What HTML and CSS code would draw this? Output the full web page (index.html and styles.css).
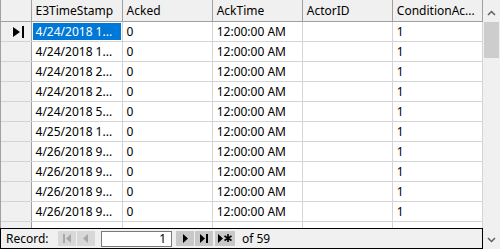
FILE: index.html
```html
<!DOCTYPE html>
<html lang="en">
<head>
    <meta charset="UTF-8">
    <title>Alarm History</title>
    <link rel="stylesheet" href="styles.css">
</head>
<body>
    <div class="datasheet">
        <div class="main">
            <div class="grid-wrap">
                <table class="grid">
                    <colgroup>
                        <col class="c-sel"><col class="c-wide"><col class="c-std"><col class="c-std"><col class="c-std"><col class="c-std">
                    </colgroup>
                    <thead>
                        <tr>
                            <th class="sel"></th>
                            <th>E3TimeStamp</th>
                            <th>Acked</th>
                            <th>AckTime</th>
                            <th>ActorID</th>
                            <th>ConditionAc...</th>
                        </tr>
                    </thead>
                    <tbody>
                        <tr>
                            <td class="sel current">
                                <svg width="12" height="12" viewBox="0 0 12 12"><polygon points="0,1 7,6 0,11" fill="#000"/><rect x="9" y="0" width="2" height="12" fill="#000"/></svg>
                            </td>
                            <td class="active">4/24/2018 1...</td><td>0</td><td>12:00:00 AM</td><td></td><td>1</td>
                        </tr>
                        <tr><td class="sel"></td><td>4/24/2018 1...</td><td>0</td><td>12:00:00 AM</td><td></td><td>1</td></tr>
                        <tr><td class="sel"></td><td>4/24/2018 2...</td><td>0</td><td>12:00:00 AM</td><td></td><td>1</td></tr>
                        <tr><td class="sel"></td><td>4/24/2018 2...</td><td>0</td><td>12:00:00 AM</td><td></td><td>1</td></tr>
                        <tr><td class="sel"></td><td>4/24/2018 5...</td><td>0</td><td>12:00:00 AM</td><td></td><td>1</td></tr>
                        <tr><td class="sel"></td><td>4/25/2018 1...</td><td>0</td><td>12:00:00 AM</td><td></td><td>1</td></tr>
                        <tr><td class="sel"></td><td>4/26/2018 9...</td><td>0</td><td>12:00:00 AM</td><td></td><td>1</td></tr>
                        <tr><td class="sel"></td><td>4/26/2018 9...</td><td>0</td><td>12:00:00 AM</td><td></td><td>1</td></tr>
                        <tr><td class="sel"></td><td>4/26/2018 9...</td><td>0</td><td>12:00:00 AM</td><td></td><td>1</td></tr>
                        <tr><td class="sel"></td><td>4/26/2018 9...</td><td>0</td><td>12:00:00 AM</td><td></td><td>1</td></tr>
                        <!-- next row only shows its top edge above the navigation bar -->
                        <tr><td class="sel"></td><td></td><td></td><td></td><td></td><td></td></tr>
                    </tbody>
                </table>
            </div>
            <div class="navbar">
                <span class="nav-label">Record:</span>
                <span class="btn disabled">
                    <svg width="10" height="9" viewBox="0 0 10 9"><rect x="1" y="0" width="2" height="9"/><polygon points="9,0 4,4.5 9,9"/></svg>
                </span>
                <span class="btn disabled">
                    <svg width="10" height="9" viewBox="0 0 10 9"><polygon points="7,0 2,4.5 7,9"/></svg>
                </span>
                <span class="pos">1</span>
                <span class="btn">
                    <svg width="10" height="9" viewBox="0 0 10 9"><polygon points="3,0 8,4.5 3,9"/></svg>
                </span>
                <span class="btn">
                    <svg width="10" height="9" viewBox="0 0 10 9"><polygon points="1,0 6,4.5 1,9"/><rect x="7" y="0" width="2" height="9"/></svg>
                </span>
                <span class="btn new">
                    <svg width="14" height="9" viewBox="0 0 14 9"><polygon points="0,0 5,4.5 0,9"/><path d="M10 0v8M6.5 2l7 4.5M13.5 2l-7 4.5" stroke="#000" stroke-width="1.6"/></svg>
                </span>
                <span class="nav-count">of 59</span>
            </div>
        </div>
        <div class="vscroll">
            <svg class="arrow" width="9" height="6" viewBox="0 0 9 6"><path d="M1 5l3.5-3.5L8 5" fill="none" stroke="#606060" stroke-width="1.5"/></svg>
            <div class="track"><div class="thumb"></div></div>
            <svg class="arrow" width="9" height="6" viewBox="0 0 9 6"><path d="M1 1l3.5 3.5L8 1" fill="none" stroke="#606060" stroke-width="1.5"/></svg>
        </div>
    </div>
</body>
</html>
```

FILE: styles.css
```css
body {
    margin: 0;
    width: 500px;
    height: 249px;
    overflow: hidden;
    font-family: "Noto Sans", "Open Sans", sans-serif;
    font-size: 12px;
    color: #000;
    background: #fff;
}
.datasheet {
    display: flex;
    height: 249px;
}
.main {
    width: 483px;
    display: flex;
    flex-direction: column;
}
.grid-wrap {
    height: 228px;
    overflow: hidden;
    border-left: 1px solid #a0a0a0;
}
.grid {
    border-collapse: collapse;
    table-layout: fixed;
    width: 482px;
}
.c-sel { width: 30px; }
.c-wide { width: 91px; }
.c-std { width: 90px; }
.grid th,
.grid td {
    height: 19px;
    padding: 0 0 0 4px;
    text-align: left;
    white-space: nowrap;
    overflow: hidden;
    line-height: 19px;
    border-right: 1px solid #d4d4d4;
    border-bottom: 1px solid #d4d4d4;
}
.grid th {
    height: 21px;
    font-weight: normal;
    background: #f0f0f0;
    border-right: 1px solid #a0a0a0;
    border-bottom: 1px solid #a0a0a0;
}
.grid td.sel {
    background: #f0f0f0;
    border-right: 1px solid #a0a0a0;
    padding: 0;
}
.grid td.current svg {
    display: block;
    margin: 0 0 0 12px;
}
.grid td.active {
    background: #0078d7;
    color: #fff;
    box-shadow: inset 0 0 0 1px #fff;
}
.navbar {
    flex: 1;
    display: flex;
    align-items: center;
    gap: 1px;
    border: 1px solid #000;
    background: #f0f0f0;
    padding-left: 5px;
}
.nav-label {
    width: 46px;
    margin-right: 5px;
}
.btn {
    width: 18px;
    height: 15px;
    display: flex;
    align-items: center;
    justify-content: center;
    background: #c8c8c8;
}
.btn.new {
    width: 20px;
    margin-left: 1px;
}
.btn svg {
    fill: #000;
}
.btn.disabled {
    background: #d8d8d8;
}
.btn.disabled svg {
    fill: #a8a8a8;
}
.pos {
    width: 64px;
    height: 14px;
    line-height: 14px;
    margin: 0 3px 0 5px;
    padding-right: 5px;
    text-align: right;
    background: #fff;
    border: 1px solid #7a7a7a;
}
.nav-count {
    margin-left: 6px;
}
.vscroll {
    width: 17px;
    background: #f0f0f0;
    display: flex;
    flex-direction: column;
    align-items: center;
}
.vscroll .arrow {
    margin: 10px 0 4px;
}
.vscroll .arrow:last-child {
    margin: 4px 0 6px;
}
.track {
    flex: 1;
    width: 100%;
}
.thumb {
    margin: 2px 1px 0;
    height: 36px;
    background: #cdcdcd;
}
```
